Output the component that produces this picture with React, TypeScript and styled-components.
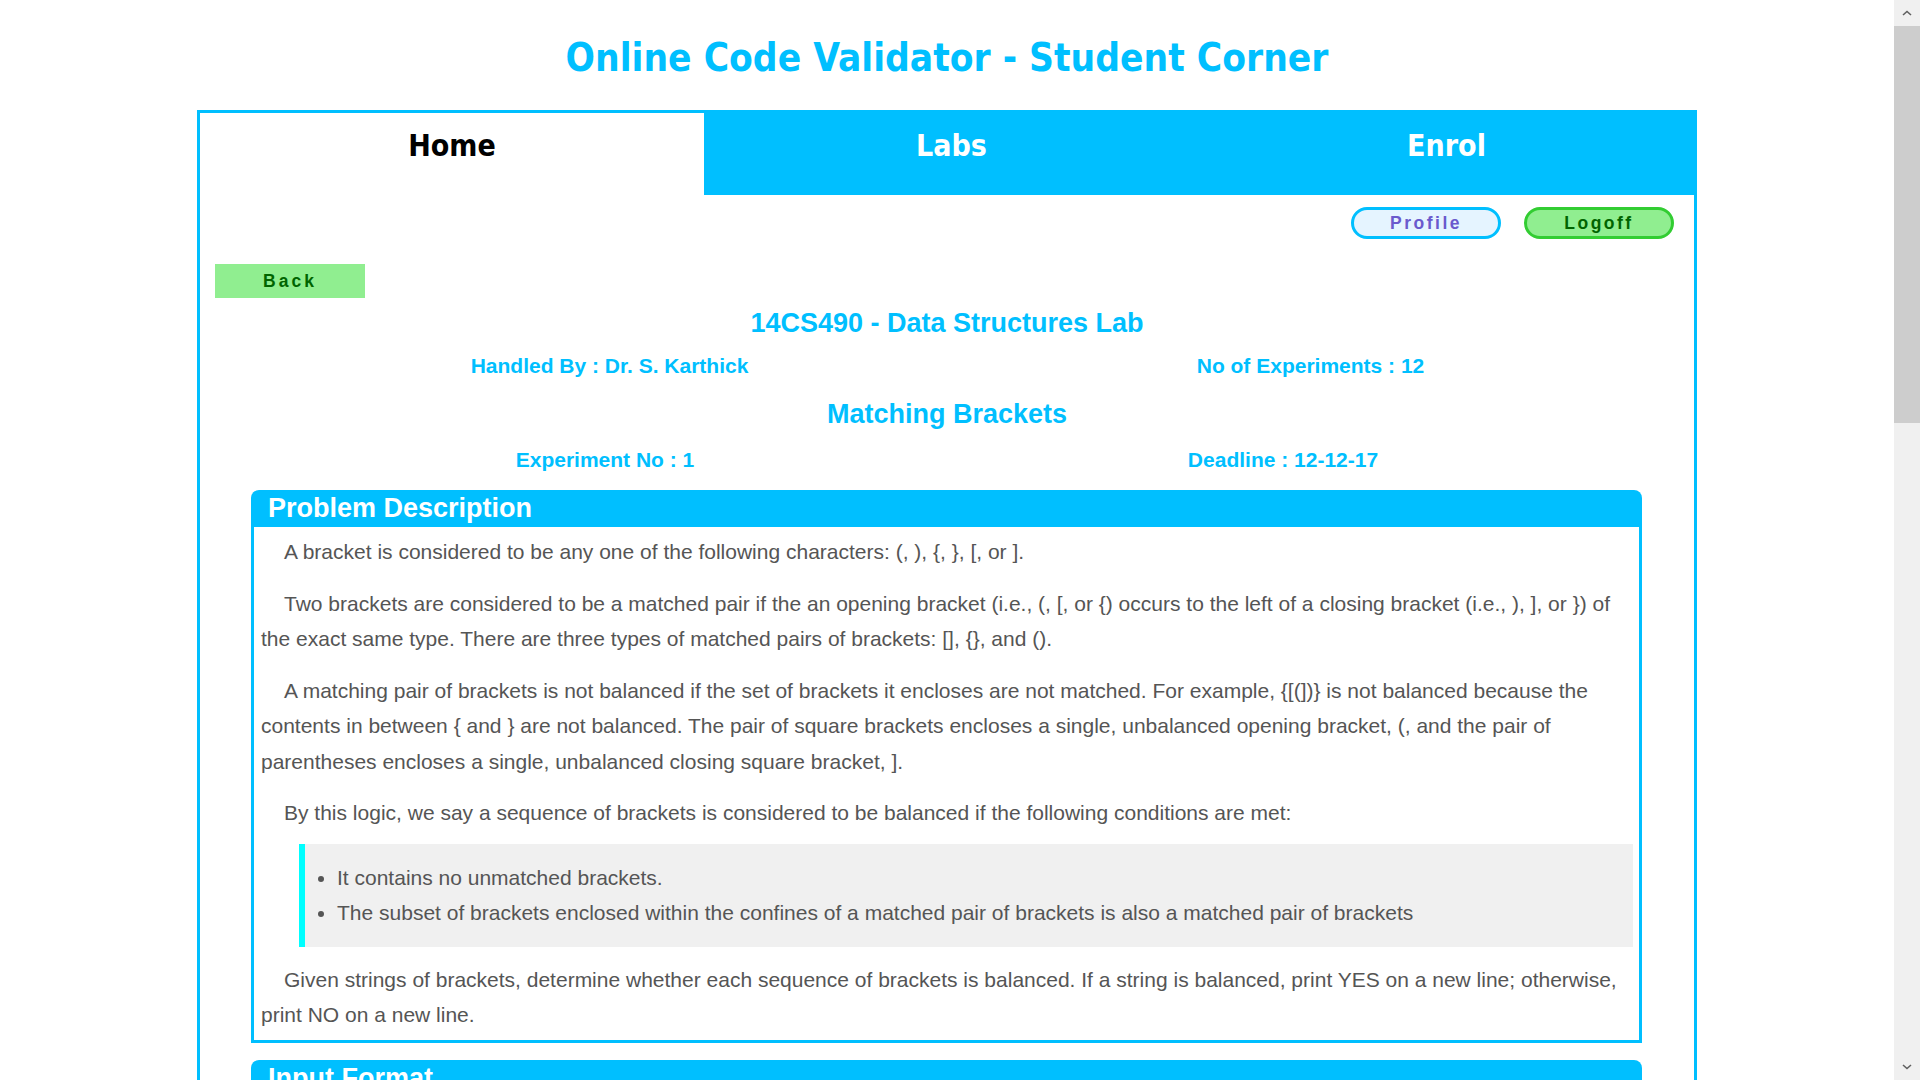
import React from 'react';
import styled, { createGlobalStyle } from 'styled-components';

const GlobalStyle = createGlobalStyle`
  body {
    margin: 0;
    padding-right: 26px;
    background: #ffffff;
    font-family: "Liberation Sans", Arial, sans-serif;
  }
`;

// stands in for the browser's classic scrollbar seen in the screenshot
const ScrollTrack = styled.div`
  position: fixed;
  top: 0;
  right: 0;
  width: 26px;
  height: 100vh;
  display: flex;
  flex-direction: column;
  background: #f0f0f0;
`;

const ScrollArrow = styled.div`
  height: 26px;
  display: flex;
  align-items: center;
  justify-content: center;
`;

const ScrollThumb = styled.div`
  height: 397px;
  background: #cdcdcd;
`;

const ScrollGap = styled.div`
  flex: 1;
`;

const Title = styled.h1`
  margin: 36px 0 30px;
  height: 44px;
  line-height: 44px;
  text-align: center;
  font-family: "DejaVu Sans Condensed", "DejaVu Sans", sans-serif;
  font-weight: bold;
  font-size: 38.5px;
  color: #00bfff;
`;

const Container = styled.div`
  width: 1494px;
  margin: 0 auto;
  border: 3px solid #00bfff;
  border-bottom: none;
  padding-bottom: 60px;
`;

const TabBar = styled.nav`
  display: flex;
  height: 82px;
`;

const Tab = styled.a<{ $active?: boolean }>`
  flex: 1;
  padding-top: 15px;
  line-height: 36px;
  text-align: center;
  font-family: "DejaVu Sans Condensed", "DejaVu Sans", sans-serif;
  font-weight: bold;
  font-size: 30px;
  text-decoration: none;
  cursor: pointer;
  background: ${(p) => (p.$active ? '#ffffff' : '#00bfff')};
  color: ${(p) => (p.$active ? '#000000' : '#ffffff')};

  &:first-child {
    flex: 0 0 504px;
  }
`;

const Actions = styled.div`
  display: flex;
  justify-content: flex-end;
  gap: 23px;
  margin-top: 12px;
  padding-right: 20px;
`;

const PillButton = styled.button<{ $variant: 'profile' | 'logoff' }>`
  box-sizing: border-box;
  width: 150px;
  height: 32px;
  padding: 0;
  border-radius: 16px;
  border: 3px solid ${(p) => (p.$variant === 'profile' ? '#00bfff' : '#32cd32')};
  background: ${(p) => (p.$variant === 'profile' ? '#e5f4ff' : '#90ee90')};
  color: ${(p) => (p.$variant === 'profile' ? '#6a5acd' : '#006400')};
  font-family: "Liberation Sans", Arial, sans-serif;
  font-weight: bold;
  font-size: 17.5px;
  letter-spacing: 2.5px;
  cursor: pointer;
`;

const BackButton = styled.button`
  display: block;
  width: 150px;
  height: 34px;
  margin: 25px 0 0 15px;
  border: none;
  background: #90ee90;
  color: #006400;
  font-family: "Liberation Sans", Arial, sans-serif;
  font-weight: bold;
  font-size: 17.5px;
  letter-spacing: 3px;
  cursor: pointer;
`;

const Heading = styled.h2<{ $top: number }>`
  margin: ${(p) => p.$top}px 0 0;
  line-height: 32px;
  text-align: center;
  font-size: 27px;
  font-weight: bold;
  color: #00bfff;
`;

const InfoRow = styled.div<{ $top: number; $left: number; $col: number }>`
  display: grid;
  grid-template-columns: ${(p) => p.$col}px ${(p) => p.$col}px;
  margin: ${(p) => p.$top}px 0 0 ${(p) => p.$left}px;
  line-height: 26px;
  font-size: 21px;
  font-weight: bold;
  color: #00bfff;
  text-align: center;
`;

const Panel = styled.section`
  margin: 17px 52px 0 51px;
`;

const PanelHeader = styled.div`
  height: 37px;
  line-height: 37px;
  padding-left: 17px;
  border-radius: 8px 8px 0 0;
  background: #00bfff;
  color: #ffffff;
  font-size: 27px;
  font-weight: bold;
`;

const PanelBody = styled.div`
  border: 3px solid #00bfff;
  border-top: none;
  padding: 7px 0 7px 7px;
  color: #555555;
  font-size: 21px;
  line-height: 35.5px;
`;

const Para = styled.p`
  margin: 0 0 16px;
  text-indent: 23px;

  &:last-child {
    margin-bottom: 0;
  }
`;

const Quote = styled.blockquote`
  margin: -3px 6px 15px 38px;
  border-left: 6px solid #00ffff;
  background: #f0f0f0;
`;

const BulletList = styled.ul`
  margin: 0;
  padding: 16px 0 16px 32px;
`;

const Pre = styled.pre`
  margin: 0 0 4px;
  padding: 4px 16px;
  font-family: "Liberation Mono", "Courier New", monospace;
  font-size: 20px;
  line-height: 30px;
  color: #333333;
`;

const Chevron = ({ up }: { up?: boolean }) => (
  <svg width="10" height="6" viewBox="0 0 10 6">
    <path
      d={up ? 'M1 5 L5 1.5 L9 5' : 'M1 1 L5 4.5 L9 1'}
      fill="none"
      stroke="#606060"
      strokeWidth="1.6"
    />
  </svg>
);

const App = () => {
  return (
    <>
      <GlobalStyle />
      <ScrollTrack>
        <ScrollArrow>
          <Chevron up />
        </ScrollArrow>
        <ScrollThumb />
        <ScrollGap />
        <ScrollArrow>
          <Chevron />
        </ScrollArrow>
      </ScrollTrack>

      <Title>Online Code Validator - Student Corner</Title>
      <Container>
        <TabBar>
          <Tab $active>Home</Tab>
          <Tab>Labs</Tab>
          <Tab>Enrol</Tab>
        </TabBar>
        <Actions>
          <PillButton $variant="profile">Profile</PillButton>
          <PillButton $variant="logoff">Logoff</PillButton>
        </Actions>
        <BackButton>Back</BackButton>

        <Heading $top={9}>14CS490 - Data Structures Lab</Heading>
        <InfoRow $top={14} $left={59} $col={701}>
          <span>Handled By : Dr. S. Karthick</span>
          <span>No of Experiments : 12</span>
        </InfoRow>
        <Heading $top={19}>Matching Brackets</Heading>
        <InfoRow $top={17} $left={66} $col={678}>
          <span>Experiment No : 1</span>
          <span>Deadline : 12-12-17</span>
        </InfoRow>

        <Panel>
          <PanelHeader>Problem Description</PanelHeader>
          <PanelBody>
            <Para>A bracket is considered to be any one of the following characters: (, ), {'{'}, {'}'}, [, or ].</Para>
            <Para>
              Two brackets are considered to be a matched pair if the an opening bracket (i.e., (, [, or {'{'}) occurs to the left of a closing bracket (i.e., ), ], or {'}'}) of the exact same type. There are three types of matched pairs of brackets: [], {'{}'}, and ().
            </Para>
            <Para>
              A matching pair of brackets is not balanced if the set of brackets it encloses are not matched. For example, {'{[(])}'} is not balanced because the contents in between {'{'} and {'}'} are not balanced. The pair of square brackets encloses a single, unbalanced opening bracket, (, and the pair of parentheses encloses a single, unbalanced closing square bracket, ].
            </Para>
            <Para>By this logic, we say a sequence of brackets is considered to be balanced if the following conditions are met:</Para>
            <Quote>
              <BulletList>
                <li>It contains no unmatched brackets.</li>
                <li>The subset of brackets enclosed within the confines of a matched pair of brackets is also a matched pair of brackets</li>
              </BulletList>
            </Quote>
            <Para>
              Given strings of brackets, determine whether each sequence of brackets is balanced. If a string is balanced, print YES on a new line; otherwise, print NO on a new line.
            </Para>
          </PanelBody>
        </Panel>

        <Panel>
          <PanelHeader>Input Format</PanelHeader>
          <PanelBody>
            <Para>The first line contains a single integer, n, denoting the number of strings.</Para>
            <Para>Each line i of the n subsequent lines consists of a single string, s, denoting a sequence of brackets.</Para>
          </PanelBody>
        </Panel>

        <Panel>
          <PanelHeader>Constraints</PanelHeader>
          <PanelBody>
            <Para>1 ≤ n ≤ 1000</Para>
            <Para>1 ≤ length of s ≤ 1000, where length of s is the length of the sequence.</Para>
            <Para>All characters in the sequences ∈ {'{'} {'{'}, {'}'}, (, ), [, ] {'}'}.</Para>
          </PanelBody>
        </Panel>

        <Panel>
          <PanelHeader>Output Format</PanelHeader>
          <PanelBody>
            <Para>For each string, return YES or NO.</Para>
          </PanelBody>
        </Panel>

        <Panel>
          <PanelHeader>Sample Input</PanelHeader>
          <PanelBody>
            <Pre>{'3\n{[()]}\n{[(])}\n{{[[(())]]}}'}</Pre>
          </PanelBody>
        </Panel>

        <Panel>
          <PanelHeader>Sample Output</PanelHeader>
          <PanelBody>
            <Pre>{'YES\nNO\nYES'}</Pre>
          </PanelBody>
        </Panel>

        <Panel>
          <PanelHeader>Explanation</PanelHeader>
          <PanelBody>
            <Para>The string {'{[()]}'} meets both criteria for being a balanced string, so we print YES on a new line.</Para>
            <Para>The string {'{[(])}'} is not balanced because the brackets enclosed by the matched pair [ and ] are not balanced: [(]).</Para>
            <Para>The string {'{{[[(())]]}}'} meets both criteria for being a balanced string, so we print YES on a new line.</Para>
          </PanelBody>
        </Panel>
      </Container>
    </>
  );
};

export default App;
